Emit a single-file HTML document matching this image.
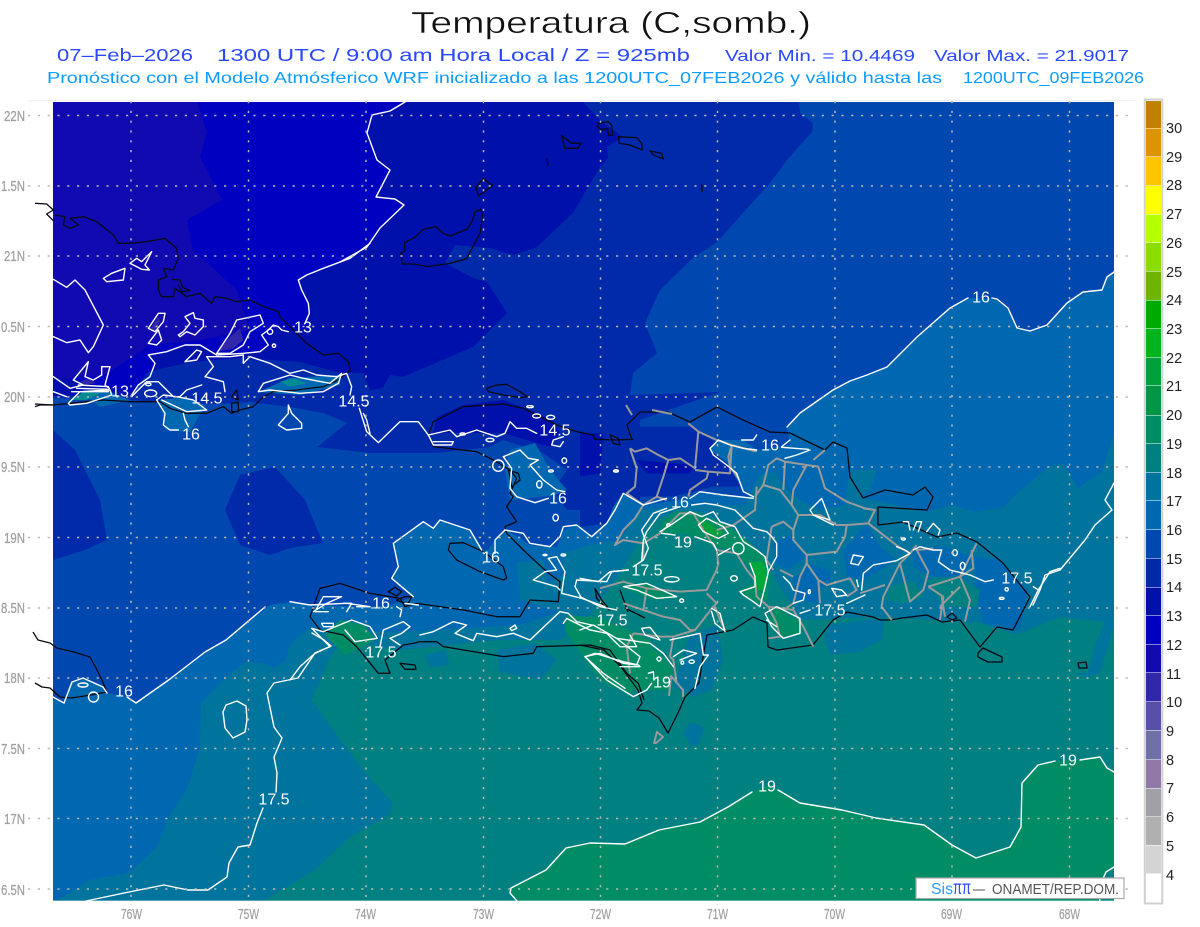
<!DOCTYPE html>
<html lang="es">
<head>
<meta charset="utf-8">
<title>Temperatura (C,somb.)</title>
<style>
html,body{margin:0;padding:0;background:#fff;width:1200px;height:927px;overflow:hidden}
svg{display:block;position:absolute;left:0;top:0}
text{font-family:"Liberation Sans",sans-serif}
path,circle,ellipse,line{vector-effect:non-scaling-stroke}
.w path,.w ellipse,.w circle{fill:none;stroke:#fff;stroke-width:1.4;stroke-linejoin:round;stroke-linecap:round}
.k path{fill:none;stroke:#0a0a14;stroke-width:1.3;stroke-linejoin:round}
.g path{fill:none;stroke:#9a9a9a;stroke-width:2;stroke-linejoin:round}
.l text{fill:#fff;font-size:16px;text-anchor:middle;dominant-baseline:central}
.a text{fill:#a0a0a0;font-size:14.5px;stroke:#a0a0a0;stroke-width:.25}
.c text{fill:#222;font-size:14.5px}
</style>
</head>
<body>
<svg width="1200" height="927" viewBox="0 0 1200 927" xmlns="http://www.w3.org/2000/svg">
<rect width="1200" height="927" fill="#fff"/>
<defs><clipPath id="m"><rect x="53" y="102" width="1061" height="799"/></clipPath></defs>

<!-- titles -->
<text x="411" y="33" font-size="31" fill="#111" stroke="#fff" stroke-width=".45" textLength="400" lengthAdjust="spacingAndGlyphs">Temperatura (C,somb.)</text>
<g font-size="17.5" fill="#2a48ff">
<text x="57" y="61" textLength="136" lengthAdjust="spacingAndGlyphs">07–Feb–2026</text>
<text x="217" y="61" textLength="473" lengthAdjust="spacingAndGlyphs">1300 UTC / 9:00 am Hora Local / Z = 925mb</text>
<text x="725" y="61" font-size="16" textLength="190" lengthAdjust="spacingAndGlyphs">Valor Min. = 10.4469</text>
<text x="934" y="61" font-size="16" textLength="195" lengthAdjust="spacingAndGlyphs">Valor Max. = 21.9017</text>
</g>
<g font-size="16" fill="#0a9cff">
<text x="47" y="83" textLength="895" lengthAdjust="spacingAndGlyphs">Pronóstico con el Modelo Atmósferico WRF inicializado a las 1200UTC_07FEB2026 y válido hasta las</text>
<text x="963" y="83" textLength="181" lengthAdjust="spacingAndGlyphs">1200UTC_09FEB2026</text>
</g>

<line x1="28" y1="100.5" x2="1135" y2="100.5" stroke="#eeeeee"/>

<!-- fills -->
<g clip-path="url(#m)">
<rect x="53" y="102" width="1061" height="799" fill="#0000c0"/>
<path fill="#100ab0" d="M53,102 197,102 207,133 200,157 222,200 187,220 193,250 237,290 250,330 200,340 150,345 105,375 53,380Z"/>
<path fill="#0010aa" d="M405,102 390,111 372,115 367,133 377,160 390,170 376,197 395,199 404,205 380,228 367,247 340,262 298,280 310,310 305,328 288,330 278,327 268,333 270,347 250,353 217,355 200,345 185,345 167,352 148,355 155,363 150,377 132,392 110,388 53,377 53,901 1114,901 1114,102Z"/>
<path fill="#002aaa" d="M583,102 600,120 623,137 607,147 608,158 600,167 573,213 537,247 513,255 490,248 455,245 445,263 473,278 487,282 507,313 473,347 403,377 390,375 383,388 370,390 363,373 340,373 300,362 240,358 190,362 148,372 130,396 53,396 53,901 1114,901 1114,102Z"/>
<path fill="#0048b0" d="M799,102 800,113 813,123 812,132 787,160 770,183 717,242 693,258 660,290 645,323 657,353 633,373 630,395 630,490 610,510 567,510 553,490 567,470 543,453 503,440 490,447 437,453 370,453 317,447 347,423 323,413 290,407 250,402 200,405 130,400 53,398 53,901 1114,901 1114,102Z"/>
<!-- darker pockets -->
<g fill="#002aaa">
<path d="M53,430 75,450 100,500 107,540 85,550 53,560Z"/>
<path d="M240,475 275,467 305,500 323,543 290,548 270,555 240,545 225,510Z"/>
<path d="M630,395 720,392 640,420 640,510 610,510 575,505 630,470Z"/>
</g>
<path fill="#0010aa" d="M437,417 463,405 503,400 530,410 553,421 560,433 550,447 503,433 450,433 433,433Z"/>
<g transform="translate(580,390) scale(.33333)">
<path fill="#002aaa" d="M150,110 330,110 480,200 510,290 400,290 280,320 170,320 90,400 0,410 0,0 150,0Z"/>
<path fill="#0010aa" d="M0,130 70,130 60,250 0,260Z M170,210 340,225 330,250 200,250Z"/>
</g>
<!-- 16+ -->
<path fill="#0068b0" d="M1114,272 1107,277 1102,290 1083,292 1067,303 1047,325 1030,331 1017,328 1008,308 997,299 967,298 950,308 917,337 887,367 867,375 850,381 833,390 800,413 787,427 790,445 757,450 743,440 717,440 710,450 727,463 743,490 753,497 723,495 700,492 680,500 643,505 623,493 613,507 607,523 592,537 577,525 563,530 557,547 530,545 507,530 495,540 488,550 482,550 470,530 440,520 433,528 423,522 393,543 398,567 392,578 413,597 390,605 368,607 310,605 290,602 270,605 226,640 205,652 170,679 136,703 127,697 107,693 103,687 83,678 72,682 64,703 53,697 53,901 1114,901Z"/>
<g fill="#0068b0">
<path d="M510,450 535,443 550,470 567,490 555,495 510,500 505,470Z"/>
<path d="M85,395 105,390 130,400 100,407Z"/>
<path d="M160,400 185,397 205,405 190,432 165,430Z"/>
<path d="M258,392 290,378 340,375 340,385 300,395Z"/>
</g>
<!-- 17+ -->
<path fill="#00749c" d="M57,901 90,880 129,873 157,847 169,817 188,787 200,747 201,703 226,677 246,662 263,663 274,668 286,660 289,647 294,640 310,628 340,630 400,632 470,628 520,625 560,612 520,600 517,563 543,560 548,583 563,575 563,553 590,545 620,540 640,510 700,505 745,505 760,475 775,472 787,490 800,500 820,510 845,505 850,470 877,470 870,490 860,497 927,512 953,505 973,512 1003,508 1013,497 1047,468 1063,463 1078,488 1102,472 1114,433 1114,901Z"/>
<g transform="translate(580,390) scale(.33333)" fill="#0068b0">
<path d="M580,460 640,430 650,470 680,500 620,540 590,520Z"/>
<path d="M680,520 750,540 750,580 700,600 660,590Z"/>
<path d="M640,560 700,540 720,640 640,630Z"/>
<path d="M860,400 900,470 950,510 850,570 800,560 790,480Z"/>
<path d="M1180,500 1260,510 1300,560 1345,600 1320,720 1210,700 1190,620Z"/>
<path d="M1000,470 1090,470 1180,500 1150,560 1060,560 1000,530Z"/>
<path d="M270,760 370,730 420,800 400,880 340,880 270,830Z"/>
</g>
<!-- 18+ -->
<path fill="#008080" d="M263,901 315,870 350,837 389,815 393,803 367,775 346,747 312,700 329,660 343,640 400,650 450,645 500,640 560,640 590,615 600,600 620,575 640,540 650,523 677,510 700,512 723,523 747,540 767,563 777,583 793,607 800,620 885,617 980,623 1017,635 1060,617 1114,623 1114,901Z"/>
<g fill="#00749c">
<path d="M497,650 535,643 557,660 540,680 500,672Z"/>
<path d="M828,625 885,617 882,640 860,652 830,655 825,640Z"/>
<path d="M673,687 694,697 712,690 723,660 718,625 690,635Z"/>
<path d="M683,733 690,722 704,727 700,743 692,747Z"/>
<path d="M1073,673 1087,673 1097,640 1114,600 1114,625 1100,673 1087,677Z"/>
<path d="M425,655 445,650 450,665 430,668Z"/>
</g>
<g transform="translate(580,390) scale(.33333)" fill="#008080">
<path d="M1040,570 1130,560 1200,600 1190,650 1090,650Z"/>
<path d="M930,590 1000,575 1030,620 970,640 915,630Z"/>
</g>
<!-- 19+ -->
<path fill="#008c64" d="M517,901 510,893 511,888 546,870 566,848 590,843 625,844 659,830 700,822 728,807 756,790 768,786 780,790 800,803 842,810 876,818 924,825 952,845 976,858 1010,847 1021,827 1022,783 1038,765 1059,761 1079,760 1100,757 1107,768 1114,772 1114,867 1106,872 1098,890 1100,901Z"/>
<g transform="translate(580,390) scale(.33333)">
<path fill="#008c64" d="M235,430 250,395 290,365 340,365 400,390 450,410 500,450 560,500 570,560 560,630 520,640 480,600 520,580 510,530 460,480 405,470 350,440 300,430Z"/>
<path fill="#008c64" d="M590,650 630,680 670,690 660,730 600,740 560,690Z"/>
<path fill="#008c64" d="M130,590 200,580 290,620 230,630 170,610Z"/>
<path fill="#008c64" d="M40,710 150,730 240,790 280,840 270,900 150,900 100,850 40,790 0,780 0,730Z"/>
<path fill="#00a03c" d="M355,390 380,395 430,430 400,445 360,420Z"/>
<path fill="#00a83c" d="M510,515 550,515 560,545 555,600 530,600 525,560Z"/>
<path fill="#00a03c" d="M160,740 200,770 230,800 180,785Z"/>
</g>
<path fill="#008c64" d="M567,615 600,618 650,640 655,665 630,695 600,680 565,630Z"/>
<path fill="#008c64" d="M340,620 365,625 375,640 345,655 325,635Z"/>
<!-- cold-side specials west -->
<g transform="translate(30,200) scale(.33333)">
<path fill="#3028a8" d="M565,455 600,410 630,385 640,420 610,445Z"/>
<path fill="#3028a8" d="M362,385 385,350 390,365 375,390Z"/>
<path fill="#3028a8" d="M150,545 180,535 195,550 165,555Z"/>
<path fill="#008c90" d="M125,600 160,575 210,580 170,600Z"/>
<path fill="#008c90" d="M750,545 790,535 830,550 780,560Z"/>
</g>
<path fill="#a0d8d4" d="M53,900.5H1114V901.5H53Z"/>
</g>

<!-- coast black -->
<g class="k">
<g transform="translate(30,200) scale(.33333)">
<path d="M15,10 50,12 70,30 50,42 70,62 M75,45 105,50 100,75 120,85 145,75 120,55 160,50 200,65 250,105 265,130 300,130 350,125 405,115 440,145 445,175 430,210 400,205 410,230 385,240 385,270 395,290 430,290 435,265 470,290 510,280 545,310 555,290 590,295 620,305 660,300 700,320 745,335 750,350 800,400 830,430 880,465 925,460 955,485 960,510 925,540 880,560 800,570 730,575 700,590 670,620 630,630 605,640 580,620 530,640 470,640 420,625 390,605 300,605 220,600 120,610 70,615 30,615 15,620"/>
<path d="M620,570 625,600 605,590Z M605,610 625,608 625,635 605,635Z"/>
<path d="M425,238 450,240 458,262 480,272 455,275 445,255"/>
</g>
<g transform="translate(340,100) scale(.33333)">
<path d="M775,70 805,65 815,75 818,105 805,107 803,85 785,90 772,80Z"/>
<path d="M835,110 890,113 905,130 907,150 870,135 838,130Z"/>
<path d="M930,153 965,160 970,177 940,165Z"/>
<path d="M665,107 695,130 722,130 715,145 675,145Z"/>
<path d="M620,175 625,197"/>
<path d="M430,235 458,257 415,287 408,262Z"/>
<path d="M423,328 405,335 398,360 382,387 330,408 310,400 288,380 250,388 225,412 193,428 195,452 182,460 187,492 220,492 262,500 330,490 380,476 420,400 428,350Z"/>
<path d="M1085,253 1087,275"/>
<path d="M440,865 470,855 500,853 540,875 562,890 545,893 490,885 445,875Z"/>
</g>
<path d="M33,632 38,640 50,643 57,648 74,652 90,657 96,668 102,680 107,693 M35,683 42,687 50,688 60,697 71,698 91,695 107,692"/>
<path d="M35,404 53,405"/>
<g transform="translate(290,390) scale(.33333)">
<path d="M1030,148 975,150 915,148 910,135 860,125 800,105 770,90 700,55 640,42 520,50 430,95 415,135 430,170 500,178 560,185 610,210 660,240 680,265 660,310 670,320 650,350 680,395 645,410 650,430 700,480 770,545 810,575 805,635 720,630 690,680 620,680 520,660 380,640 345,650 330,625 240,610 150,580 90,595 60,680 90,720 160,735 200,770 265,850 300,850 285,810 340,765 370,760 390,755 440,755 460,770 640,800 730,790 740,770 900,765 960,780 1010,850 1045,880 1062,930"/>
<path d="M480,460 520,458 580,485 640,530 650,565 640,570 570,545 500,510 475,480Z"/>
<path d="M295,605 315,592 335,605 320,618Z M320,630 345,620 365,620 355,640 330,635Z"/>
<path d="M330,820 375,825 378,838 345,838Z"/>
<path d="M655,240 685,250 690,270 665,290 660,260Z"/>
<path d="M915,595 935,630 960,660 945,650 920,625Z"/>
<path d="M960,135 985,145 990,165 970,160Z"/>
</g>
<path d="M580,645 604,650 621,667 638,690 642,703 637,710 649,711 659,718 668,733 678,713 685,697 699,683 703,657 707,635 733,630 753,617 767,623 768,647 777,650 813,645 833,620 847,612 873,617 880,620 890,620 902,618 927,615 942,622 960,620 980,647 997,627 1013,630 1030,597 1003,563 977,542 957,533 937,537 903,522 878,525 878,507 927,510 933,497 925,487 913,495 885,490 863,498 850,477 847,448 833,442 825,450 790,433 770,432 743,420 717,407 690,422 668,412 640,412 627,425 632,440" stroke="#303038"/>
<path d="M978,653 983,648 1002,657 1002,662 988,662 978,657Z"/>
<path d="M947,617 952,613 957,618 952,620Z"/>
<path d="M1078,663 1086,662 1087,668 1079,668Z"/>
<path d="M620,590 628,612 M625,608 645,618"/>
</g>

<!-- gray political lines -->
<g class="g">
<g transform="translate(580,390) scale(.33333)">
<path d="M150,175 170,235 165,290 140,310 190,345 165,385 130,420 105,465 130,450 190,460 190,510"/>
<path d="M150,175 165,185 200,175 235,195 265,210 300,205 345,235 355,125 M325,100 355,125 410,150 455,165 530,185"/>
<path d="M345,240 385,245 450,250 455,170 M265,210 250,260 230,320 190,345 M230,320 260,330 M385,245 380,265 330,300 325,320"/>
<path d="M455,165 445,200 450,230 475,265"/>
<path d="M525,320 550,285 600,300 635,345 655,375 640,420 640,450 680,495 680,520 660,560 640,640 610,660"/>
<path d="M655,375 720,375 770,405 800,405 795,440 770,485 680,495"/>
<path d="M550,285 565,225 590,205 615,215 610,300 M615,215 680,225 640,300 635,345 M680,225 715,230 735,295 800,335 855,355 885,360 M700,210 735,180"/>
<path d="M530,290 525,360 490,385 460,405 410,420"/>
<path d="M240,430 190,460 M240,430 300,370 340,370 370,420 410,480 415,520 410,540 380,600 300,605 200,595 130,575 60,595"/>
<path d="M410,480 470,490 500,540 525,570 530,620 565,650 640,660 670,710 700,770"/>
<path d="M565,650 590,700 600,740 565,745"/>
<path d="M680,520 715,570 740,585 810,565 830,600 800,620 M715,570 720,640 M640,560 600,540"/>
<path d="M575,410 560,510 580,540 M575,410 610,395 640,420"/>
<path d="M800,405 865,400 885,360 850,355 M865,400 955,470 990,490 960,520 910,620 905,650 935,690"/>
<path d="M960,520 990,635 1030,600 1045,545 1010,480 1060,475 M990,490 1010,465"/>
<path d="M840,610 915,585 M1045,590 1090,620 1080,690 M1045,590 1140,560 1190,460 M1140,560 1170,630 1155,695 M1140,590 1080,650 M1140,560 1180,535 1175,480"/>
<path d="M380,610 410,640 400,650 345,720 280,740 270,800 M280,740 240,740 160,730 M405,650 420,690 435,720"/>
<path d="M130,640 190,660 250,680 300,690 330,720 345,720 M160,730 140,770 150,850 M270,800 280,810 290,880 M200,595 190,660"/>
<path d="M1085,620 1095,680 M1030,475 1060,480"/>
</g>
<path d="M669,696 671,676 683,690 683,697"/>
<path d="M654,743 657,732 663,737 656,743Z"/>
<path d="M626,405 632,415 M652,410 672,414"/>
</g>

<!-- white contours -->
<g class="w">
<!-- 13 -->
<path d="M405,102 390,111 372,115 367,133 377,160 390,170 376,197 395,199 404,205 380,228 367,247 340,262"/>
<g transform="translate(30,200) scale(.33333)">
<path d="M1020,130 960,175 880,205 830,225 805,240 815,270 835,310 838,340 825,370"/>
<path d="M775,395 755,390 745,380 730,375 715,390 695,405 715,435 690,455 640,460 560,465 510,435 465,435 410,455 355,465 375,490 360,530 325,555 305,585"/>
<path d="M70,238 110,262 135,240 165,270 220,375 190,440 175,458 150,420 110,428 70,410"/>
<path d="M300,190 320,175 335,185 365,155 345,195 358,210 335,208 320,200Z"/>
<path d="M220,235 245,220 285,205 280,240 230,245Z"/>
<path d="M355,385 385,340 405,340 400,365 375,395Z M355,430 385,390 395,420 380,435Z"/>
<path d="M445,405 460,395 480,370 465,350 490,338 495,355 520,360 520,380 495,405 470,395 450,410Z"/>
<path d="M560,460 600,400 620,360 690,345 700,370 660,395 640,435 600,460Z"/>
<circle cx="720" cy="395" r="8"/><circle cx="732" cy="437" r="5"/>
<path d="M465,485 500,450 515,455 500,480Z"/>
<path d="M70,530 120,565 160,555 130,540 175,485 165,530 190,540 215,525 215,500 240,500 225,555 238,565"/>
<path d="M145,555 235,560 M140,565 235,568 M125,575 235,575"/>
<path d="M115,610 150,575 240,570 245,585 170,610 120,615Z"/>
<path d="M70,575 110,590"/>
<path d="M305,590 350,545 385,545 430,590 450,590 470,570 515,555"/>
<path d="M380,600 400,585 440,590 490,600 530,630 470,635 395,600"/>
<path d="M380,600 405,640 400,675 420,690 445,690 M460,640 465,660 475,680"/>
<ellipse cx="362" cy="580" rx="18" ry="10"/><ellipse cx="355" cy="553" rx="8" ry="4"/>
<path d="M530,470 600,470 640,465 640,490 660,470 720,490 780,520 820,510 860,525 920,530 950,520 965,560 960,585"/>
<path d="M530,470 550,500 525,530 580,545 585,575"/>
<path d="M685,575 700,550 780,525 820,535 900,550 935,520 925,550 880,575 810,580 720,570Z"/>
<path d="M775,615 785,640 815,670 815,685 770,690 745,675 775,640Z"/>
<path d="M1000,640 1010,660 1020,700"/>
</g>
<!-- 16 east -->
<path d="M1114,272 1107,277 1102,290 1083,292 1067,303 1047,325 1030,331 1017,328 1008,308 997,299 992,298 M968,298 950,308 917,337 887,367 867,375 850,381 833,390 800,413 787,427"/>
<!-- Haiti zone -->
<g transform="translate(290,390) scale(.33333)">
<path d="M208,55 230,125 265,158 330,95 385,95 415,135 480,120 500,140 560,120 620,140 645,130 660,95 680,115 710,115 740,130"/>
<path d="M820,140 790,150 785,165 810,170 820,155"/>
<path d="M415,135 430,165 485,165 490,155 430,155"/>
<ellipse cx="518" cy="132" rx="8" ry="3"/><ellipse cx="600" cy="150" rx="12" ry="5"/><ellipse cx="720" cy="50" rx="10" ry="3"/><ellipse cx="740" cy="78" rx="12" ry="6"/><ellipse cx="782" cy="82" rx="12" ry="6"/><ellipse cx="823" cy="212" rx="7" ry="8"/><circle cx="625" cy="227" r="17"/><ellipse cx="783" cy="243" rx="7" ry="3"/><ellipse cx="748" cy="283" rx="8" ry="11"/><ellipse cx="797" cy="383" rx="8" ry="10"/><ellipse cx="978" cy="243" rx="7" ry="3"/>
<path d="M640,200 690,180 715,205 745,210 720,225 760,270 800,300 825,305"/>
<path d="M640,200 665,235 660,295 680,320 735,338 775,325"/>
<path d="M645,420 700,430 720,460 780,470 810,440 820,410 860,405 905,440 950,400 975,360 1000,310 1060,345 1130,325"/>
<path d="M645,420 615,450 615,490 M575,480 540,420 450,390 430,415 400,395 310,460 325,530 305,565 370,620 M240,650 170,640 60,645 0,635"/>
<path d="M1130,355 1090,370 1055,420 1075,475 1060,510 1030,530"/>
<path d="M1015,540 965,545 950,575 860,570 855,590 875,625 945,650"/>
<path d="M730,570 765,545 800,540 775,505 800,500 825,545 820,575 815,610 875,625 M730,570 800,590 810,600"/>
<path d="M0,870 30,830 75,790 120,770 65,715 100,725 185,690 240,710 262,745 195,755 165,720"/>
<path d="M280,720 340,695 360,710 335,730 300,745 330,765 M280,720 270,770 M390,735 430,725 490,695 530,705 495,730 550,752 560,730 620,740 670,730 720,750 810,665 835,670 860,695 905,705"/>
<path d="M820,700 830,685 900,720 950,730 990,770 1040,770 1020,735"/>
<path d="M885,800 915,790 1000,815 1045,825 1050,830 990,830"/>
<path d="M885,800 950,870 1030,920 1070,900 1085,880"/>
<path d="M660,715 675,705 680,715 665,722Z"/>
<path d="M70,665 110,640 155,620 100,620 75,665 115,665 M160,640 185,640 170,665 M200,650 240,650"/>
<path d="M95,700 130,700 130,710 100,710Z"/>
<path d="M320,650 335,660 330,680 M345,640 385,645"/>
<ellipse cx="765" cy="495" rx="6" ry="2"/><ellipse cx="820" cy="495" rx="7" ry="3"/>
</g>
<!-- DR zone -->
<g transform="translate(580,390) scale(.33333)">
<path d="M390,175 415,150 450,165 490,175 530,180 M485,150 520,150 530,135"/>
<path d="M390,175 400,195 440,225 470,250 490,305 520,320"/>
<path d="M520,325 430,315 360,305 330,325"/>
<path d="M605,172 685,178 M630,150 605,170 M615,205 650,195 690,180"/>
<path d="M335,345 375,340 410,345 465,360 490,385 520,415 560,425 575,440 590,460 590,500 565,545"/>
<path d="M185,510 190,450 200,425 240,370 300,350"/>
<path d="M240,425 280,400 330,365 365,380 400,365 420,395 465,410 490,455 530,480 555,500 565,545 555,590 540,650 520,635 490,615 480,605 525,590 525,560 510,520"/>
<path d="M245,430 285,435 M345,440 400,460 410,480 M415,495 450,475"/>
<circle cx="475" cy="475" r="17"/>
<path d="M355,405 380,385 430,410 445,430 415,445 370,425Z"/>
<path d="M555,670 590,650 660,685 660,730 610,745 575,710Z"/>
<path d="M560,690 590,710"/>
<path d="M690,360 725,325 750,390 700,375Z M700,375 760,405"/>
<path d="M820,495 850,500 835,525 812,520Z"/>
<path d="M755,595 785,600 800,615 770,620Z"/>
<ellipse cx="462" cy="565" rx="10" ry="8"/><ellipse cx="275" cy="568" rx="22" ry="8"/>
<path d="M610,560 630,580 640,600 675,610 670,630 640,640 M690,660 660,670"/>
<path d="M845,600 850,550 880,525 950,512 990,490 975,480 950,470"/>
<path d="M835,590 830,570 M855,615 800,640"/>
<path d="M1000,480 1020,470 1060,480 1085,480 1075,515 1110,540 1150,550 1170,555 1215,575 1240,570"/>
<path d="M970,395 985,395 990,420 M1000,420 1010,395 1025,395 1015,425 M1040,425 1060,400 1080,420 1075,435"/>
<ellipse cx="1125" cy="488" rx="7" ry="9"/><ellipse cx="1148" cy="528" rx="7" ry="11"/><circle cx="1280" cy="598" r="5"/><ellipse cx="1265" cy="625" rx="7" ry="3"/><ellipse cx="970" cy="447" rx="6" ry="3"/><ellipse cx="108" cy="243" rx="7" ry="3"/><ellipse cx="688" cy="605" rx="3" ry="6"/><ellipse cx="305" cy="632" rx="6" ry="5"/><ellipse cx="265" cy="405" rx="5" ry="4"/>
<path d="M0,565 55,575 90,545 145,540"/>
<path d="M0,620 60,650 110,660"/>
<path d="M130,590 200,580 290,620 230,625 170,600Z"/>
<path d="M0,720 40,705 110,745 210,760 250,790 280,830"/>
<path d="M15,800 60,790 130,820 170,825 180,800 110,745"/>
<path d="M15,800 70,850 135,895"/>
<path d="M205,850 220,845 222,870"/>
<path d="M185,715 210,712 240,750 195,735Z"/>
<path d="M270,750 360,730 370,795 385,795 360,830 345,895"/>
<path d="M280,800 310,780 350,790 300,810"/>
<circle cx="237" cy="807" r="6"/><ellipse cx="335" cy="815" rx="8" ry="5"/><ellipse cx="307" cy="818" rx="4" ry="5"/>
<path d="M395,655 420,670 435,725 M395,665 405,700 430,720"/>
<path d="M1360,590 1375,600 1350,650 M1375,600 1410,545 1440,535"/>
</g>
<path d="M1114,483 1105,500 1112,510 1095,525 1085,540 1060,570 1045,575 1040,590 1033,605"/>
<!-- 17.5 south-west -->
<path d="M86,901 129,892 164,885 188,890 208,890 227,877 229,863 238,847 250,845 257,823 263,808 M276,792 277,773 274,757 282,738 274,727 267,693 274,683 298,678 315,653 331,646 324,640 312,633"/>
<!-- 16 west -->
<path d="M226,640 205,652 170,679 136,703 127,697 M107,693 103,687 83,678 72,682 64,703 53,697"/>
<path d="M265,607 226,640"/>
<ellipse cx="83" cy="685" rx="5" ry="2"/>
<circle cx="93.500" cy="697" r="5"/>
<path d="M226,705 237,701 246,706 247,720 245,732 233,738 225,728 223,712Z"/>
<!-- 19 -->
<path d="M517,901 510,893 511,888 546,870 566,848 590,843 625,844 659,830 700,822 728,807 752,792 M778,790 800,803 842,810 876,818 924,825 952,845 976,858 1010,847 1021,827 1022,783 1038,765 1055,761 M1080,760 1100,757 1107,768 1114,772"/>
<path d="M1114,867 1106,872 1098,890 1100,901"/>
</g>

<!-- grid -->
<g stroke="#b8b8b0" stroke-width="1.5" stroke-dasharray="2.2 7.6">
<path d="M131,101V905M248.500,101V905M366,101V905M483.500,101V905M600.500,101V905M717.500,101V905M835,101V905M952,101V905M1069.500,101V905"/>
<path d="M28,115.500H1133M28,186H1133M28,256H1133M28,326.500H1133M28,397H1133M28,467H1133M28,537.500H1133M28,608H1133M28,678H1133M28,748.500H1133M28,818.500H1133M28,889H1133"/>
</g>

<!-- contour labels -->
<g class="l">
<text x="981" y="298">16</text><text x="303" y="328">13</text><text x="120" y="392">13</text>
<text x="207" y="399">14.5</text><text x="354" y="402">14.5</text><text x="555" y="431">14.5</text>
<text x="191" y="435">16</text><text x="558" y="499">16</text><text x="491" y="558">16</text><text x="381" y="604">16</text><text x="124" y="692">16</text><text x="770" y="446">16</text><text x="680" y="503">16</text>
<text x="381" y="653">17.5</text><text x="274" y="800">17.5</text><text x="647" y="571">17.5</text><text x="612" y="621">17.5</text><text x="830" y="611">17.5</text><text x="1017" y="579">17.5</text>
<text x="683" y="543">19</text><text x="662" y="683">19</text><text x="767" y="787">19</text><text x="1068" y="761">19</text>
</g>

<!-- axes -->
<g class="a">
<text x="4" y="121" textLength="21" lengthAdjust="spacingAndGlyphs">22N</text>
<text x="1" y="191" textLength="24" lengthAdjust="spacingAndGlyphs">1.5N</text>
<text x="4" y="261" textLength="21" lengthAdjust="spacingAndGlyphs">21N</text>
<text x="1" y="332" textLength="24" lengthAdjust="spacingAndGlyphs">0.5N</text>
<text x="4" y="402" textLength="21" lengthAdjust="spacingAndGlyphs">20N</text>
<text x="1" y="472" textLength="24" lengthAdjust="spacingAndGlyphs">9.5N</text>
<text x="4" y="543" textLength="21" lengthAdjust="spacingAndGlyphs">19N</text>
<text x="1" y="613" textLength="24" lengthAdjust="spacingAndGlyphs">8.5N</text>
<text x="4" y="683" textLength="21" lengthAdjust="spacingAndGlyphs">18N</text>
<text x="1" y="754" textLength="24" lengthAdjust="spacingAndGlyphs">7.5N</text>
<text x="4" y="824" textLength="21" lengthAdjust="spacingAndGlyphs">17N</text>
<text x="1" y="895" textLength="24" lengthAdjust="spacingAndGlyphs">6.5N</text>
<text x="121" y="919" textLength="21" lengthAdjust="spacingAndGlyphs">76W</text>
<text x="238" y="919" textLength="21" lengthAdjust="spacingAndGlyphs">75W</text>
<text x="355" y="919" textLength="21" lengthAdjust="spacingAndGlyphs">74W</text>
<text x="473" y="919" textLength="21" lengthAdjust="spacingAndGlyphs">73W</text>
<text x="590" y="919" textLength="21" lengthAdjust="spacingAndGlyphs">72W</text>
<text x="707" y="919" textLength="21" lengthAdjust="spacingAndGlyphs">71W</text>
<text x="824" y="919" textLength="21" lengthAdjust="spacingAndGlyphs">70W</text>
<text x="941" y="919" textLength="21" lengthAdjust="spacingAndGlyphs">69W</text>
<text x="1059" y="919" textLength="21" lengthAdjust="spacingAndGlyphs">68W</text>
</g>

<!-- logo box -->
<rect x="916" y="878" width="208" height="20.500" fill="#fff" stroke="#a8a8a8" stroke-width="1.200"/>
<text x="931" y="894" font-size="15.500" fill="#2c9cff" textLength="22" lengthAdjust="spacingAndGlyphs">Sis</text>
<text x="953" y="894" font-size="19" fill="#2a48ff" textLength="18" lengthAdjust="spacingAndGlyphs">ππ</text>
<text x="973" y="894" font-size="15" fill="#555" textLength="12" lengthAdjust="spacingAndGlyphs">–</text>
<text x="992" y="894" font-size="15" fill="#555" textLength="127" lengthAdjust="spacingAndGlyphs">ONAMET/REP.DOM.</text>

<!-- colour bar -->
<rect x="1144.800" y="99.500" width="17.500" height="804" fill="#fff" stroke="#d0d0d0" stroke-width="2"/>
<g>
<rect x="1146" y="101" width="15" height="27" fill="#c08000"/>
<rect x="1146" y="128.500" width="15" height="28" fill="#dc9400"/>
<rect x="1146" y="157" width="15" height="28.500" fill="#ffc400"/>
<rect x="1146" y="186" width="15" height="28" fill="#ffff00"/>
<rect x="1146" y="214.500" width="15" height="28" fill="#b4ff00"/>
<rect x="1146" y="243" width="15" height="28" fill="#8cdc00"/>
<rect x="1146" y="271.500" width="15" height="28.500" fill="#6eb400"/>
<rect x="1146" y="300.500" width="15" height="28" fill="#00aa00"/>
<rect x="1146" y="329" width="15" height="28" fill="#00b41e"/>
<rect x="1146" y="357.500" width="15" height="28" fill="#00a03c"/>
<rect x="1146" y="386" width="15" height="29" fill="#009646"/>
<rect x="1146" y="415.500" width="15" height="28" fill="#008c64"/>
<rect x="1146" y="444" width="15" height="28" fill="#008080"/>
<rect x="1146" y="472.500" width="15" height="28" fill="#00749c"/>
<rect x="1146" y="501" width="15" height="28.500" fill="#0068b0"/>
<rect x="1146" y="530" width="15" height="28" fill="#0048b0"/>
<rect x="1146" y="558.500" width="15" height="28.500" fill="#002aaa"/>
<rect x="1146" y="587.500" width="15" height="28" fill="#0010aa"/>
<rect x="1146" y="616" width="15" height="28" fill="#0000c0"/>
<rect x="1146" y="644.500" width="15" height="28" fill="#100ab0"/>
<rect x="1146" y="673" width="15" height="28.500" fill="#3028a8"/>
<rect x="1146" y="702" width="15" height="28" fill="#5850a8"/>
<rect x="1146" y="730.500" width="15" height="29" fill="#7070a8"/>
<rect x="1146" y="760" width="15" height="28" fill="#9078a8"/>
<rect x="1146" y="788.500" width="15" height="28" fill="#a0a0a8"/>
<rect x="1146" y="817" width="15" height="28" fill="#b0b0b0"/>
<rect x="1146" y="845.500" width="15" height="28" fill="#d4d4d4"/>
</g>
<g class="c">
<text x="1166" y="133">30</text><text x="1166" y="162">29</text><text x="1166" y="190">28</text><text x="1166" y="219">27</text><text x="1166" y="248">26</text><text x="1166" y="277">25</text><text x="1166" y="305">24</text><text x="1166" y="334">23</text><text x="1166" y="363">22</text><text x="1166" y="391">21</text><text x="1166" y="420">20</text><text x="1166" y="449">19</text><text x="1166" y="478">18</text><text x="1166" y="506">17</text><text x="1166" y="535">16</text><text x="1166" y="564">15</text><text x="1166" y="592">14</text><text x="1166" y="621">13</text><text x="1166" y="650">12</text><text x="1166" y="679">11</text><text x="1166" y="707">10</text><text x="1166" y="736">9</text><text x="1166" y="765">8</text><text x="1166" y="793">7</text><text x="1166" y="822">6</text><text x="1166" y="851">5</text><text x="1166" y="880">4</text>
</g>
</svg>
</body>
</html>
